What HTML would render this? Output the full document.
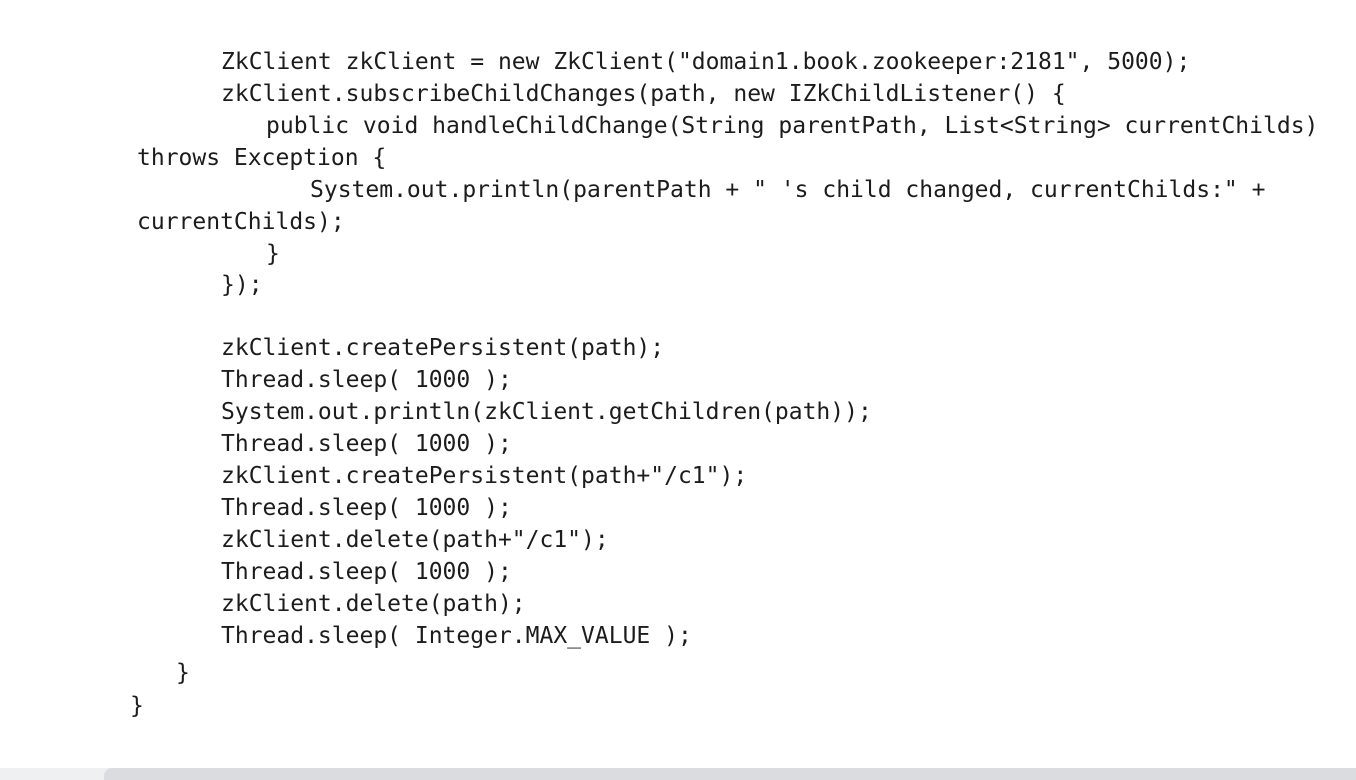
<!DOCTYPE html>
<html><head><meta charset="utf-8"><style>
html,body{margin:0;padding:0;width:1356px;height:780px;overflow:hidden;background:#fff;}
.l{position:absolute;font-family:"DejaVu Sans Mono","Liberation Mono",monospace;font-size:23px;line-height:32px;color:#1c1c1c;white-space:pre;}
.strip{position:absolute;left:0;top:768px;width:1356px;height:12px;background:#eff0f2;}
.bar{position:absolute;left:104px;top:768px;width:1260px;height:12px;background:#dadce0;border-radius:8px 0 0 0;}
</style></head><body>
<div class="l" style="left:221px;top:46px">ZkClient zkClient = new ZkClient("domain1.book.zookeeper:2181", 5000);</div>
<div class="l" style="left:221px;top:78px">zkClient.subscribeChildChanges(path, new IZkChildListener() {</div>
<div class="l" style="left:266px;top:110px">public void handleChildChange(String parentPath, List&lt;String&gt; currentChilds)</div>
<div class="l" style="left:137px;top:142px">throws Exception {</div>
<div class="l" style="left:310px;top:174px">System.out.println(parentPath + " 's child changed, currentChilds:" +</div>
<div class="l" style="left:137px;top:206px">currentChilds);</div>
<div class="l" style="left:266px;top:238px">}</div>
<div class="l" style="left:221px;top:269px">});</div>
<div class="l" style="left:221px;top:332px">zkClient.createPersistent(path);</div>
<div class="l" style="left:221px;top:364px">Thread.sleep( 1000 );</div>
<div class="l" style="left:221px;top:396px">System.out.println(zkClient.getChildren(path));</div>
<div class="l" style="left:221px;top:428px">Thread.sleep( 1000 );</div>
<div class="l" style="left:221px;top:460px">zkClient.createPersistent(path+"/c1");</div>
<div class="l" style="left:221px;top:492px">Thread.sleep( 1000 );</div>
<div class="l" style="left:221px;top:524px">zkClient.delete(path+"/c1");</div>
<div class="l" style="left:221px;top:556px">Thread.sleep( 1000 );</div>
<div class="l" style="left:221px;top:588px">zkClient.delete(path);</div>
<div class="l" style="left:221px;top:620px">Thread.sleep( Integer.MAX_VALUE );</div>
<div class="l" style="left:176px;top:657px">}</div>
<div class="l" style="left:130px;top:690px">}</div>
<div class="strip"></div><div class="bar"></div>
</body></html>
